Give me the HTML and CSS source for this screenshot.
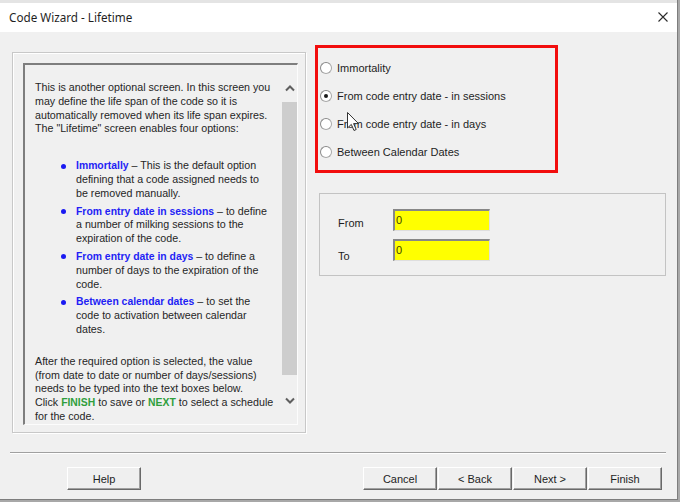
FILE: index.html
```html
<!DOCTYPE html>
<html>
<head>
<meta charset="utf-8">
<link rel="stylesheet" href="styles.css">
</head>
<body>
<div class="window">
  <div class="titlebar">
    <span class="title">Code Wizard - Lifetime</span>
    <svg class="close" width="10" height="10" viewBox="0 0 10 10"><path d="M0.5 0.5 L9.5 9.5 M9.5 0.5 L0.5 9.5" stroke="#2b2b2b" stroke-width="1.1" fill="none"/></svg>
  </div>
  <div class="content">
    <div class="main">
      <div class="left-group">
        <div class="textbox">
          <div class="text">
            <p class="intro">This is another optional screen. In this screen you<br>may define the life span of the code so it is<br>automatically removed when its life span expires.<br>The "Lifetime" screen enables four options:</p>
            <ul class="bullets">
              <li><div><span class="hl">Immortally</span> – This is the default option<br>defining that a code assigned needs to<br>be removed manually.</div></li>
              <li><div><span class="hl">From entry date in sessions</span> – to define<br>a number of milking sessions to the<br>expiration of the code.</div></li>
              <li><div><span class="hl">From entry date in days</span> – to define a<br>number of days to the expiration of the<br>code.</div></li>
              <li><div><span class="hl">Between calendar dates</span> – to set the<br>code to activation between calendar<br>dates.</div></li>
            </ul>
            <p class="after">After the required option is selected, the value<br>(from date to date or number of days/sessions)<br>needs to be typed into the text boxes below.<br>Click <span class="gr">FINISH</span> to save or <span class="gr">NEXT</span> to select a schedule<br>for the code.</p>
          </div>
          <div class="scrollbar">
            <div class="sb-btn"><svg width="10" height="7" viewBox="0 0 10 7"><path d="M1 5.5 L5 1.5 L9 5.5" stroke="#5f5f5f" stroke-width="2" fill="none"/></svg></div>
            <div class="sb-track"><div class="sb-thumb"></div></div>
            <div class="sb-btn"><svg width="10" height="7" viewBox="0 0 10 7"><path d="M1 1.5 L5 5.5 L9 1.5" stroke="#5f5f5f" stroke-width="2" fill="none"/></svg></div>
          </div>
        </div>
      </div>
      <div class="right-col">
        <div class="options">
          <div class="opt"><span class="radio"></span>Immortality</div>
          <div class="opt"><span class="radio checked"></span>From code entry date - in sessions</div>
          <div class="opt"><span class="radio"></span>From code entry date - in days</div>
          <div class="opt"><span class="radio"></span>Between Calendar Dates</div>
        </div>
        <div class="range">
          <span class="lbl lbl-from">From</span>
          <input class="field" type="text" value="0" readonly>
          <span class="lbl lbl-to">To</span>
          <input class="field" type="text" value="0" readonly>
        </div>
      </div>
    </div>
    <div class="separator"></div>
    <div class="buttons">
      <button class="btn">Help</button>
      <div class="btn-group">
        <button class="btn">Cancel</button>
        <button class="btn">&lt; Back</button>
        <button class="btn">Next &gt;</button>
        <button class="btn">Finish</button>
      </div>
    </div>
  </div>
  <svg class="cursor" width="13" height="20" viewBox="0 0 13 20"><path d="M0.5 0.5 L0.5 16 L4.3 12.4 L7 18.5 L9.2 17.5 L6.6 11.6 L11.5 11.6 Z" fill="#fff" stroke="#333" stroke-width="1"/></svg>
</div>
</body>
</html>
```

FILE: styles.css
```css
body {
  margin: 0;
  background: #a8a8a8;
  font-family: "Liberation Sans", Arial, sans-serif;
}

.window {
  position: relative;
  width: 677px;
  height: 499px;
  background: #f0f0f0;
  border-right: 1px solid #7d7d7d;
  border-bottom: 1px solid #7d7d7d;
  display: flex;
  flex-direction: column;
}

.titlebar {
  border-top: 3px solid #e4e4e4;
  background: #ffffff;
  display: flex;
  align-items: center;
  justify-content: space-between;
  padding: 0 9px 2px 9px;
  height: 27px;
}

.title {
  font-family: "Noto Sans", "Open Sans", sans-serif;
  font-size: 11.7px;
  color: #1f1f1f;
}

.content {
  flex: 1;
  display: flex;
  flex-direction: column;
}

.main {
  display: flex;
  padding: 13px 0 0 12px;
}

.left-group {
  margin-top: 7px;
  width: 294px;
  height: 381px;
  box-sizing: border-box;
  border: 1px solid #c8c8c8;
  box-shadow: inset 1px 1px 0 #ffffff, 1px 1px 0 #ffffff;
  padding: 10px 7px 7px 10px;
}

.textbox {
  height: 100%;
  box-sizing: border-box;
  border-top: 2px solid #7e7e7e;
  border-left: 2px solid #7e7e7e;
  border-right: 1px solid #fcfcfc;
  border-bottom: 1px solid #fcfcfc;
  display: flex;
  overflow: hidden;
}

.text {
  flex: 1;
  padding: 16px 0 0 10px;
  font-size: 10.7px;
  line-height: 13.8px;
  color: #262626;
  white-space: nowrap;
}

.text p {
  margin: 0;
}

.bullets {
  list-style: none;
  margin: 23px 0 0 0;
  padding: 0;
}

.bullets li {
  display: flex;
  margin-top: 4px;
}

.bullets li:first-child {
  margin-top: 0;
}

.bullets li::before {
  content: "";
  flex: none;
  width: 5px;
  height: 5px;
  border-radius: 50%;
  background: #1a1af2;
  margin: 4.5px 10px 0 26px;
}

.hl {
  color: #1f1ff5;
  font-weight: bold;
  font-size: 10.4px;
}

.gr {
  color: #2f9e3c;
  font-weight: bold;
  font-size: 10.4px;
}

.text .after {
  margin-top: 18px;
}

.scrollbar {
  flex: none;
  width: 15px;
  height: 329px;
  margin-top: 15px;
  display: flex;
  flex-direction: column;
}

.sb-btn {
  height: 17px;
  display: flex;
  align-items: center;
  justify-content: center;
}

.sb-track {
  flex: 1;
  padding-top: 5px;
}

.sb-thumb {
  height: 273px;
  background: #cdcdcd;
}

.right-col {
  margin-left: 9px;
  display: flex;
  flex-direction: column;
}

.options {
  width: 243px;
  height: 128px;
  box-sizing: border-box;
  border: 3px solid #f20d0d;
  padding: 6px 0 0 2px;
}

.opt {
  height: 28px;
  display: flex;
  align-items: center;
  font-size: 11px;
  color: #1e1e1e;
}

.radio {
  width: 12px;
  height: 12px;
  box-sizing: border-box;
  border-radius: 50%;
  border: 1px solid #a8a8a8;
  border-top-color: #8a8a8a;
  border-left-color: #8a8a8a;
  background: #ffffff;
  margin-right: 5px;
  display: flex;
  align-items: center;
  justify-content: center;
}

.radio.checked::after {
  content: "";
  width: 4px;
  height: 4px;
  border-radius: 50%;
  background: #1a1a1a;
}

.range {
  margin: 20px 0 0 4px;
  width: 347px;
  height: 83px;
  box-sizing: border-box;
  border: 1px solid #c3c3c3;
  padding: 15px 0 0 18px;
  display: grid;
  grid-template-columns: 55px 97px;
  grid-template-rows: 22px 22px;
  row-gap: 8px;
  align-content: start;
}

.lbl {
  font-size: 11px;
  line-height: 14px;
  color: #1e1e1e;
}

.lbl-from {
  padding-top: 7px;
}

.lbl-to {
  padding-top: 10px;
}

.field {
  width: 97px;
  height: 22px;
  box-sizing: border-box;
  margin: 0;
  background: #ffff00;
  border-style: solid;
  border-width: 2px 1px 1px 2px;
  border-color: #878787 #dedede #dedede #878787;
  font-family: "Liberation Sans", Arial, sans-serif;
  font-size: 11px;
  color: #3e3e00;
  padding: 0 0 2px 1px;
  outline: none;
}

.separator {
  margin: 19px 11px 0 10px;
  border-top: 1px solid #a0a0a0;
  border-bottom: 1px solid #ffffff;
}

.buttons {
  display: flex;
  justify-content: space-between;
  margin-top: 13px;
  padding: 0 15px 0 67px;
}

.btn-group {
  display: flex;
  gap: 1px;
}

.btn {
  width: 74px;
  height: 23px;
  box-sizing: border-box;
  margin: 0;
  padding: 0;
  background: #efefef;
  border: 1px solid;
  border-color: #ffffff #696969 #696969 #ffffff;
  box-shadow: inset -1px -1px 0 #a0a0a0;
  font-family: "Liberation Sans", Arial, sans-serif;
  font-size: 11px;
  color: #1e1e1e;
}

.cursor {
  position: absolute;
  left: 347px;
  top: 112px;
}
```
